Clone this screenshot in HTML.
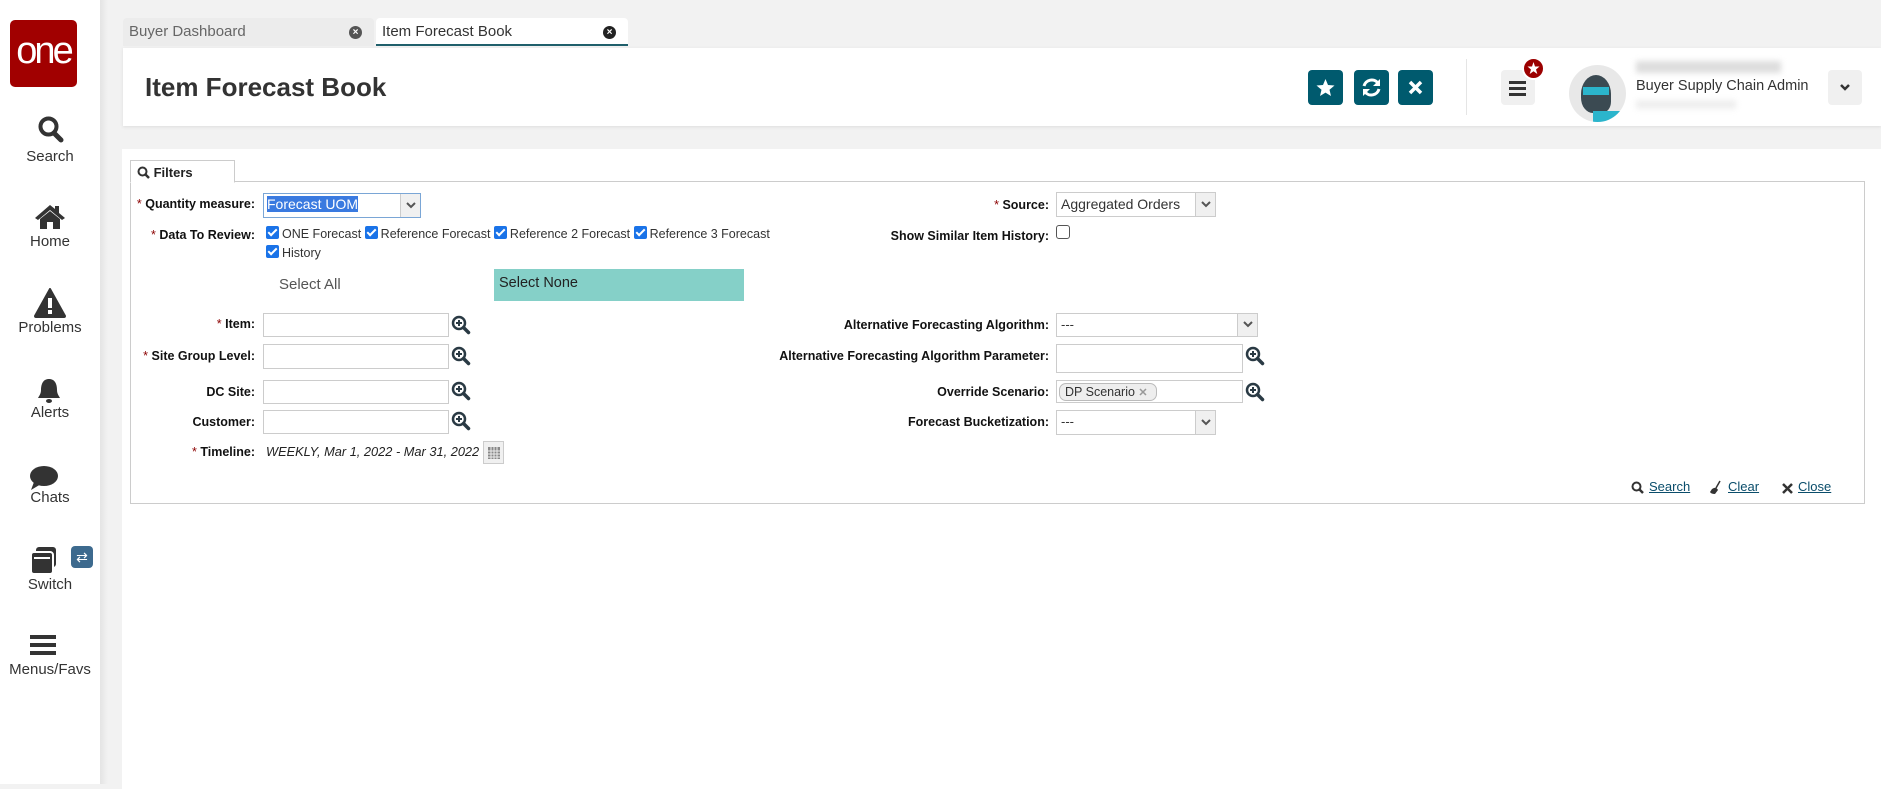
<!DOCTYPE html>
<html><head><meta charset="utf-8">
<style>
*{box-sizing:border-box;margin:0;padding:0}
body{width:1881px;height:784px;overflow:hidden;background:#f2f2f2;font-family:"Liberation Sans",sans-serif;position:relative;color:#222}
.abs{position:absolute}
#side{left:0;top:0;width:100px;height:784px;background:#fff}
#shadow{left:100px;top:0;width:8px;height:784px;background:linear-gradient(90deg,#e4e4e4,#f2f2f2)}
.logo{left:10px;top:20px;width:67px;height:67px;background:#a10000;border-radius:5px;color:#fff;font-size:38px;text-align:center;line-height:62px;letter-spacing:-3px}
.si{left:0;width:100px;text-align:center;font-size:15px;color:#333}
.tab{top:18px;height:28px;font-size:15px;color:#666;padding:0 0 0 6px;line-height:27px;border-radius:4px 4px 0 0}
.x{position:absolute;right:12px;top:8px;width:13px;height:13px;border-radius:50%;background:#555;color:#fff;font-size:10px;line-height:13px;text-align:center;font-weight:bold}
#hdr{left:123px;top:48px;width:1758px;height:78px;background:#fff;box-shadow:0 1px 3px #ddd}
.btn{top:70px;width:35px;height:35px;background:#005a6e;border-radius:4px}
#panel{left:122px;top:149px;width:1759px;height:640px;background:#fff}
#box{left:130px;top:181px;width:1735px;height:323px;border:1px solid #ccc}
.lbl{position:absolute;font-size:12.5px;font-weight:bold;text-align:right;color:#111;white-space:nowrap}
.lbl b{color:#8b0000;font-weight:normal}
.inp{position:absolute;border:1px solid #ccc;background:#fff;height:25px}
.sel{position:absolute;border:1px solid #ccc;background:#fff;height:25px;font-size:14px;padding:3px 4px;color:#333}
.sel .ar{position:absolute;right:0;top:0;width:20px;height:23px;background:#f0f0f0;border-left:1px solid #ccc}
.mag{position:absolute;width:20px;height:20px}
.cb{display:inline-block;width:13px;height:13px;background:#1a73e8;border-radius:2px;vertical-align:-1px;position:relative;margin-right:3px}
.cb:after{content:"";position:absolute;left:4px;top:1px;width:3px;height:7px;border:solid #fff;border-width:0 2px 2px 0;transform:rotate(45deg)}
.link{position:absolute;top:479px;font-size:13px;color:#0a4d6b;text-decoration:underline}
</style></head><body>
<div id="side" class="abs"></div>
<div id="shadow" class="abs"></div>
<div class="abs logo">one</div>

<svg class="abs" style="left:38px;top:116px" width="26" height="28" viewBox="0 0 26 28"><circle cx="10.5" cy="10.5" r="8" fill="none" stroke="#333" stroke-width="4"/><path d="M16 17 L23 24" stroke="#333" stroke-width="5" stroke-linecap="round"/></svg>
<div class="abs si" style="top:148px">Search</div>
<svg class="abs" style="left:34px;top:204px" width="32" height="26" viewBox="0 0 32 26"><path d="M16 1 L1 14 L4 16 L16 6 L28 16 L31 14 L25 9 V2 H21 V5 Z" fill="#333"/><path d="M6 15 L16 7 L26 15 V25 H19 V18 H13 V25 H6 Z" fill="#333"/></svg>
<div class="abs si" style="top:233px">Home</div>
<svg class="abs" style="left:34px;top:288px" width="32" height="30" viewBox="0 0 32 30"><path d="M16 1 L31 28 Q31 29 30 29 H2 Q1 29 1 28 Z" fill="#333" stroke="#333" stroke-width="2" stroke-linejoin="round"/><rect x="14" y="10" width="4" height="10" fill="#fff"/><rect x="14" y="22" width="4" height="4" fill="#fff"/></svg>
<div class="abs si" style="top:319px">Problems</div>
<svg class="abs" style="left:36px;top:377px" width="26" height="28" viewBox="0 0 26 28"><path d="M13 2 C6 2 5 9 5 13 C5 17 3 19 2 21 H24 C23 19 21 17 21 13 C21 9 20 2 13 2Z" fill="#333"/><ellipse cx="13" cy="24" rx="3" ry="2" fill="#333"/></svg>
<div class="abs si" style="top:404px">Alerts</div>
<svg class="abs" style="left:29px;top:465px" width="30" height="26" viewBox="0 0 30 26"><ellipse cx="15" cy="11" rx="14" ry="10" fill="#333"/><path d="M5 17 L2 25 L12 19Z" fill="#333"/></svg>
<div class="abs si" style="top:489px">Chats</div>
<svg class="abs" style="left:29px;top:546px" width="30" height="30" viewBox="0 0 30 30"><rect x="7" y="1" width="20" height="20" rx="3" fill="#333"/><rect x="2" y="6" width="22" height="22" rx="3" fill="#333" stroke="#fff" stroke-width="2"/><rect x="5" y="11" width="16" height="2" fill="#fff"/></svg>
<div class="abs" style="left:71px;top:546px;width:22px;height:22px;background:#3d6a8e;border-radius:4px;color:#fff;font-size:14px;text-align:center;line-height:22px">⇄</div>
<div class="abs si" style="top:576px">Switch</div>
<svg class="abs" style="left:30px;top:634px" width="26" height="22" viewBox="0 0 26 22"><rect y="1" width="26" height="4" fill="#333"/><rect y="9" width="26" height="4" fill="#333"/><rect y="17" width="26" height="4" fill="#333"/></svg>
<div class="abs si" style="top:661px">Menus/Favs</div>

<div class="abs tab" style="left:123px;width:251px;background:#ececec">Buyer Dashboard<span class="x">×</span></div>
<div class="abs tab" style="left:376px;width:252px;background:#fff;color:#333;border-bottom:2px solid #1f5f6b">Item Forecast Book<span class="x" style="background:#222">×</span></div>

<div id="hdr" class="abs"></div>
<div class="abs" style="left:145px;top:72px;font-size:26px;font-weight:bold;color:#333">Item Forecast Book</div>
<div class="abs btn" style="left:1308px"><svg width="35" height="35" viewBox="0 0 35 35"><path d="M17.5 9 L20 15 L26.5 15.5 L21.5 19.8 L23 26 L17.5 22.6 L12 26 L13.5 19.8 L8.5 15.5 L15 15Z" fill="#fff"/></svg></div>
<div class="abs btn" style="left:1354px"><svg width="35" height="35" viewBox="0 0 35 35"><path d="M10 16 A8 8 0 0 1 24 13" fill="none" stroke="#fff" stroke-width="3"/><path d="M26 9 V16 H19Z" fill="#fff"/><path d="M25 19 A8 8 0 0 1 11 22" fill="none" stroke="#fff" stroke-width="3"/><path d="M9 26 V19 H16Z" fill="#fff"/></svg></div>
<div class="abs btn" style="left:1398px"><svg width="35" height="35" viewBox="0 0 35 35"><path d="M12 12 L23 23 M23 12 L12 23" stroke="#fff" stroke-width="3.5"/></svg></div>
<div class="abs" style="left:1466px;top:59px;width:1px;height:56px;background:#e5e5e5"></div>
<div class="abs" style="left:1501px;top:70px;width:34px;height:35px;background:#f0f0f0;border-radius:4px"><div style="position:absolute;left:8px;top:11px;width:17px;height:3px;background:#333;box-shadow:0 6px 0 #333,0 12px 0 #333"></div></div>
<div class="abs" style="left:1522px;top:57px;width:23px;height:23px;border-radius:50%;background:#9b0000;border:2px solid #fff"><svg width="19" height="19" viewBox="0 0 19 19"><path d="M9.5 3 L11 7.5 L15.5 7.5 L12 10.5 L13.3 15 L9.5 12.3 L5.7 15 L7 10.5 L3.5 7.5 L8 7.5Z" fill="#fff"/></svg></div>
<div class="abs" style="left:1569px;top:65px;width:57px;height:57px;border-radius:50%;background:#e8e8e8;overflow:hidden"><div style="position:absolute;left:12px;top:10px;width:30px;height:38px;background:#3b4a52;border-radius:50% 50% 30% 40%"></div><div style="position:absolute;left:14px;top:22px;width:26px;height:8px;background:#2bb5cc"></div><div style="position:absolute;left:24px;top:46px;width:30px;height:12px;background:#2bb5cc"></div></div>
<div class="abs" style="left:1636px;top:61px;width:145px;height:12px;background:#ddd;filter:blur(3px)"></div>
<div class="abs" style="left:1636px;top:78px;font-size:14.5px;color:#333">Buyer Supply Chain Admin</div>
<div class="abs" style="left:1636px;top:100px;width:100px;height:9px;background:#eee;filter:blur(3px)"></div>
<div class="abs" style="left:1828px;top:70px;width:34px;height:35px;background:#f0f0f0;border-radius:4px;text-align:center"><svg width="12" height="35" viewBox="0 0 12 35"><path d="M2 15 L6 19 L10 15" fill="none" stroke="#333" stroke-width="2.5"/></svg></div>

<div id="panel" class="abs"></div>
<div id="box" class="abs"></div>
<div class="abs" style="left:130px;top:160px;width:105px;height:23px;border:1px solid #ccc;border-bottom:1px solid #fff;background:#fff;font-size:13px;font-weight:bold;padding:4px 0 0 6px"><svg width="13" height="13" viewBox="0 0 13 13" style="vertical-align:-2px"><circle cx="5.5" cy="5.5" r="4" fill="none" stroke="#333" stroke-width="2"/><path d="M8.5 8.5 L12 12" stroke="#333" stroke-width="2.5"/></svg> Filters</div>

<div class="lbl" style="right:1626px;top:197px"><b>*</b> Quantity measure:</div>
<div class="sel" style="left:263px;top:193px;width:158px;height:25px;border-color:#7aa6d6;padding:2px 3px"><span style="background:#3a7ae0;color:#fff">Forecast UOM</span><div class="ar" style="height:23px"><svg width="20" height="23"><path d="M6 9 L10 13 L14 9" fill="none" stroke="#555" stroke-width="2"/></svg></div></div>
<div class="lbl" style="right:1626px;top:228px"><b>*</b> Data To Review:</div>
<div class="abs" style="left:266px;top:226px;font-size:12.5px;color:#333;white-space:nowrap"><span class="cb"></span>ONE Forecast <span class="cb"></span>Reference Forecast <span class="cb"></span>Reference 2 Forecast <span class="cb"></span>Reference 3 Forecast</div>
<div class="abs" style="left:266px;top:245px;font-size:12.5px;color:#333"><span class="cb"></span>History</div>
<div class="abs" style="left:279px;top:276px;font-size:15px;color:#555">Select All</div>
<div class="abs" style="left:494px;top:269px;width:250px;height:32px;background:#85d0c8;font-size:14.5px;color:#222;padding:6px 5px">Select None</div>

<div class="lbl" style="right:1626px;top:317px"><b>*</b> Item:</div>
<div class="inp" style="left:263px;top:313px;width:186px;height:24px"></div>
<div class="lbl" style="right:1626px;top:349px"><b>*</b> Site Group Level:</div>
<div class="inp" style="left:263px;top:344px;width:186px;height:25px"></div>
<div class="lbl" style="right:1626px;top:385px">DC Site:</div>
<div class="inp" style="left:263px;top:380px;width:186px;height:24px"></div>
<div class="lbl" style="right:1626px;top:415px">Customer:</div>
<div class="inp" style="left:263px;top:410px;width:186px;height:24px"></div>
<div class="lbl" style="right:1626px;top:445px"><b>*</b> Timeline:</div>
<div class="abs" style="left:266px;top:444px;font-size:12.8px;font-style:italic;color:#222;white-space:nowrap">WEEKLY, Mar 1, 2022 - Mar 31, 2022</div>
<div class="abs" style="left:483px;top:441px;width:21px;height:23px;background:#f0f0f0;border:1px solid #ccc"><svg width="19" height="21"><rect x="4" y="5" width="12" height="12" fill="#888"/><path d="M4 9H16M4 12H16M4 15H16M7 5V17M10 5V17M13 5V17" stroke="#eee" stroke-width="1"/></svg></div>

<div class="lbl" style="right:832px;top:198px"><b>*</b> Source:</div>
<div class="sel" style="left:1056px;top:192px;width:160px;height:25px">Aggregated Orders<div class="ar"><svg width="20" height="23"><path d="M6 9 L10 13 L14 9" fill="none" stroke="#555" stroke-width="2"/></svg></div></div>
<div class="lbl" style="right:832px;top:229px">Show Similar Item History:</div>
<div class="abs" style="left:1056px;top:225px;width:14px;height:14px;border:1px solid #555;border-radius:3px;background:#fff"></div>
<div class="lbl" style="right:832px;top:318px">Alternative Forecasting Algorithm:</div>
<div class="sel" style="left:1056px;top:313px;width:202px;height:24px;font-size:13px">---<div class="ar" style="height:22px"><svg width="20" height="22"><path d="M6 8 L10 12 L14 8" fill="none" stroke="#555" stroke-width="2"/></svg></div></div>
<div class="lbl" style="right:832px;top:349px">Alternative Forecasting Algorithm Parameter:</div>
<div class="inp" style="left:1056px;top:344px;width:187px;height:29px"></div>
<div class="lbl" style="right:832px;top:385px">Override Scenario:</div>
<div class="inp" style="left:1056px;top:380px;width:187px;height:23px"></div>
<div class="abs" style="left:1059px;top:383px;width:98px;height:18px;border:1px solid #bbb;border-radius:7px;background:#eee;font-size:12.5px;color:#333;padding:1px 5px;white-space:nowrap">DP Scenario <span style="color:#999;font-weight:bold;font-size:11px">✕</span></div>
<div class="lbl" style="right:832px;top:415px">Forecast Bucketization:</div>
<div class="sel" style="left:1056px;top:410px;width:160px;height:25px;font-size:13px">---<div class="ar"><svg width="20" height="23"><path d="M6 9 L10 13 L14 9" fill="none" stroke="#555" stroke-width="2"/></svg></div></div>

<svg class="mag" style="left:451px;top:315px" viewBox="0 0 20 20"><circle cx="8" cy="8" r="6" fill="none" stroke="#2a3a44" stroke-width="2.5"/><path d="M5 8H11M8 5V11" stroke="#2a3a44" stroke-width="2"/><path d="M12.5 12.5L17.5 17.5" stroke="#2a3a44" stroke-width="3.5" stroke-linecap="round"/></svg>
<svg class="mag" style="left:451px;top:346px" viewBox="0 0 20 20"><circle cx="8" cy="8" r="6" fill="none" stroke="#2a3a44" stroke-width="2.5"/><path d="M5 8H11M8 5V11" stroke="#2a3a44" stroke-width="2"/><path d="M12.5 12.5L17.5 17.5" stroke="#2a3a44" stroke-width="3.5" stroke-linecap="round"/></svg>
<svg class="mag" style="left:451px;top:381px" viewBox="0 0 20 20"><circle cx="8" cy="8" r="6" fill="none" stroke="#2a3a44" stroke-width="2.5"/><path d="M5 8H11M8 5V11" stroke="#2a3a44" stroke-width="2"/><path d="M12.5 12.5L17.5 17.5" stroke="#2a3a44" stroke-width="3.5" stroke-linecap="round"/></svg>
<svg class="mag" style="left:451px;top:411px" viewBox="0 0 20 20"><circle cx="8" cy="8" r="6" fill="none" stroke="#2a3a44" stroke-width="2.5"/><path d="M5 8H11M8 5V11" stroke="#2a3a44" stroke-width="2"/><path d="M12.5 12.5L17.5 17.5" stroke="#2a3a44" stroke-width="3.5" stroke-linecap="round"/></svg>
<svg class="mag" style="left:1245px;top:346px" viewBox="0 0 20 20"><circle cx="8" cy="8" r="6" fill="none" stroke="#2a3a44" stroke-width="2.5"/><path d="M5 8H11M8 5V11" stroke="#2a3a44" stroke-width="2"/><path d="M12.5 12.5L17.5 17.5" stroke="#2a3a44" stroke-width="3.5" stroke-linecap="round"/></svg>
<svg class="mag" style="left:1245px;top:382px" viewBox="0 0 20 20"><circle cx="8" cy="8" r="6" fill="none" stroke="#2a3a44" stroke-width="2.5"/><path d="M5 8H11M8 5V11" stroke="#2a3a44" stroke-width="2"/><path d="M12.5 12.5L17.5 17.5" stroke="#2a3a44" stroke-width="3.5" stroke-linecap="round"/></svg>

<svg class="abs" style="left:1631px;top:481px" width="13" height="13" viewBox="0 0 13 13"><circle cx="5.5" cy="5.5" r="4" fill="none" stroke="#333" stroke-width="2"/><path d="M8.5 8.5L12 12" stroke="#333" stroke-width="2.5"/></svg>
<div class="link" style="left:1649px">Search</div>
<svg class="abs" style="left:1709px;top:480px" width="14" height="15" viewBox="0 0 14 15"><path d="M11 1 L7 8" stroke="#333" stroke-width="1.5"/><path d="M3 9 Q7 6 9 10 L6 14 Q2 14 1 12Z" fill="#333"/></svg>
<div class="link" style="left:1728px">Clear</div>
<svg class="abs" style="left:1782px;top:483px" width="11" height="11" viewBox="0 0 11 11"><path d="M1 1L10 10M10 1L1 10" stroke="#333" stroke-width="2.5"/></svg>
<div class="link" style="left:1798px">Close</div>
</body></html>
